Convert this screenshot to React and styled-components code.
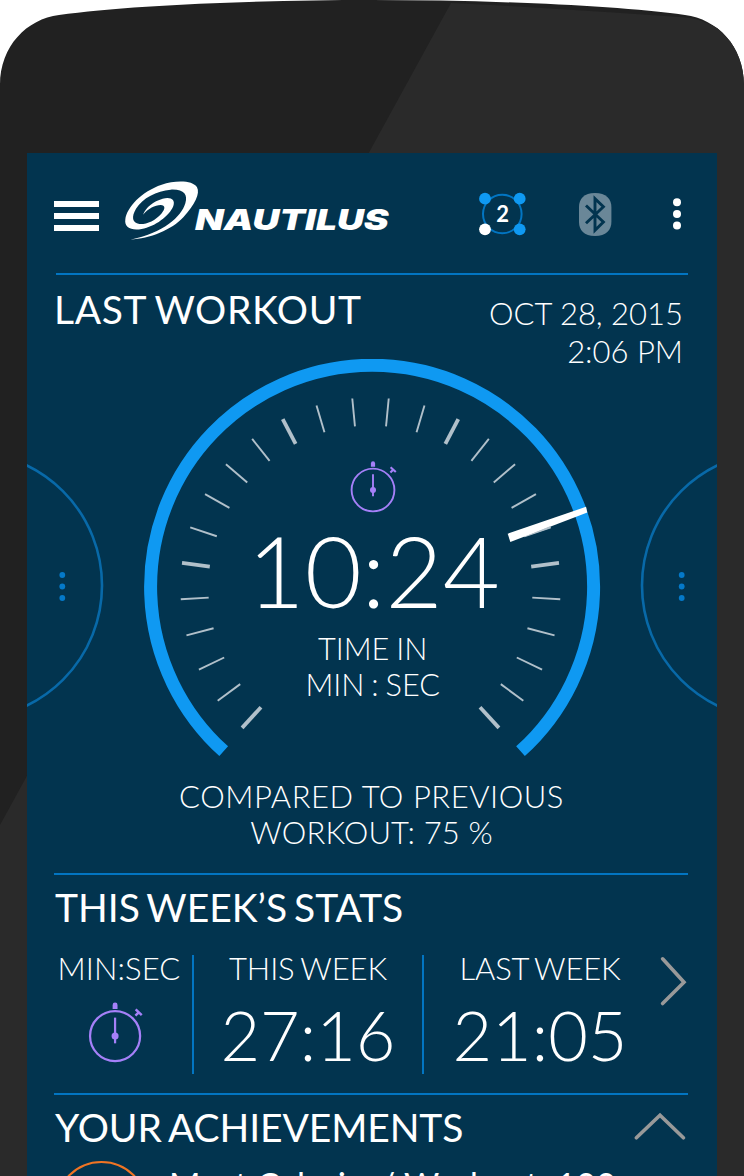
import React from 'react';
import styled, { createGlobalStyle } from 'styled-components';

const GlobalStyle = createGlobalStyle`
  *, *::before, *::after { box-sizing: border-box; }
  html, body { margin: 0; padding: 0; background: #fff; }
  body { font-family: Lato, "Liberation Sans", sans-serif; color: #fff; overflow: hidden; }
  svg { display: block; flex: none; }
`;

const Phone = styled.main`
  display: grid;
  width: 744px;
  height: 1176px;
  overflow: hidden;
`;

const Shell = styled.svg`
  grid-area: 1 / 1;
`;

const Screen = styled.div`
  grid-area: 1 / 1;
  margin: 153px 27px 0;
  background: #02344f;
  overflow: hidden;
  z-index: 1;
`;

const Header = styled.header`
  display: flex;
  height: 120px;
  padding-left: 27px;
`;

const MenuButton = styled.div`
  display: flex;
  flex-direction: column;
  gap: 6px;
  width: 45px;
  margin-top: 48px;
`;

const MenuBar = styled.span`
  height: 6px;
  background: #fff;
`;

const Logo = styled.svg`
  margin: 25px 0 0 23px;
`;

const HeaderIcon = styled.svg`
  margin: ${(p) => p.$margin};
`;

const Divider = styled.div`
  height: 2px;
  margin: 0 29px 0 ${(p) => p.$left || 27}px;
  background: #0275c2;
`;

const WorkoutSection = styled.section`
  height: 598px;
`;

const WorkoutHead = styled.div`
  display: flex;
  justify-content: space-between;
  height: 84px;
  padding: 14px 34px 0 27px;
`;

const Title = styled.h2`
  margin: 0;
  font-size: 39px;
  font-weight: 400;
  line-height: 40px;
  letter-spacing: ${(p) => p.$tracking || 0}px;
  word-spacing: ${(p) => p.$wordGap || 0}px;
  white-space: nowrap;
`;

const Caption = styled.div`
  font-size: ${(p) => p.$size || 31}px;
  font-weight: 300;
  line-height: ${(p) => p.$line || 36}px;
  letter-spacing: ${(p) => p.$tracking || 0}px;
  word-spacing: ${(p) => p.$wordGap || 0}px;
  text-align: ${(p) => p.$align || 'center'};
  white-space: nowrap;
`;

const DateBlock = styled(Caption)`
  margin-top: 5px;
`;

const Carousel = styled.div`
  display: flex;
  justify-content: space-between;
  height: 398px;
`;

const DialStack = styled.div`
  display: grid;
  width: 464px;
`;

const DialFace = styled.svg`
  grid-area: 1 / 1;
`;

const Readout = styled.div`
  grid-area: 1 / 1;
  display: flex;
  flex-direction: column;
  align-items: center;
  padding: 101.4px 0 0 1.4px;
`;

const BigTime = styled.div`
  margin: 6px 0 11px 2px;
  font-size: 98.5px;
  font-weight: 300;
  line-height: 100px;
`;

const Comparison = styled.div`
  display: flex;
  flex-direction: column;
  align-items: center;
  margin: 21px 1px 0 0;
`;

const StatsSection = styled.section`
  height: 218px;
  padding: 12px 27px 0 28px;
`;

const StatsRow = styled.div`
  display: flex;
  margin-top: 23px;
`;

const StatColumn = styled.div`
  display: flex;
  flex-direction: column;
  align-items: center;
  width: ${(p) => p.$width}px;
  margin-right: ${(p) => p.$gap || 0}px;
`;

const StatRule = styled.div`
  width: 2px;
  height: 119px;
  margin-top: 5px;
  background: #0275c2;
`;

const StatValue = styled.div`
  margin-top: 14px;
  font-size: 68.4px;
  font-weight: 300;
  line-height: 70px;
`;

const TimerSlot = styled.div`
  margin: 15px 8px 0 0;
`;

const Chevron = styled.svg`
  margin-top: ${(p) => p.$top}px;
`;

const AchievementsSection = styled.section`
  height: 81px;
  padding: 12px 27px 0 28px;
`;

const AchievementsHead = styled.div`
  display: flex;
  justify-content: space-between;
`;

const AchievementRow = styled.div`
  display: flex;
  gap: 21px;
  margin-top: 14px;
`;

const Medal = styled.div`
  flex: none;
  width: 93px;
  height: 93px;
  border: 2px solid #f07423;
  border-radius: 50%;
`;

const AchievementName = styled.div`
  margin-top: 4px;
  font-size: 34px;
  font-weight: 400;
  line-height: 40px;
  letter-spacing: 0.36px;
  white-space: nowrap;
`;

function Stopwatch({ scale = 1 }) {
  return (
    <svg width={48 * scale} height={54 * scale} viewBox="-24 -30 48 54" fill="none" stroke="#a580f8">
      <circle r="21.4" strokeWidth="1.9" />
      <path d="M-2.1-23.2v-3.4a2.1 2.1 0 0 1 4.2 0v3.4z" fill="#a580f8" stroke="none" />
      <path d="M0-15.8V6.2" strokeWidth="1.9" />
      <circle r="3" fill="#a580f8" stroke="none" />
      <path d="M17.6-22.8l5.2 4.9M20.4-20.4l-3 3" strokeWidth="2.1" />
    </svg>
  );
}

function SidePeek({ side }) {
  const left = side === 'left';
  const x = left ? 62.3 : 681.7;
  return (
    <svg width="80" height="398" viewBox={`${left ? 27 : 637} 359 80 398`}>
      <circle cx={left ? -31.5 : 775.5} cy="585.5" r="133.5" fill="none" stroke="#0869a8" strokeWidth="2.6" />
      {[575, 586.5, 598].map((y) => (
        <circle key={y} cx={x} cy={y} r="2.9" fill="#0479c9" />
      ))}
    </svg>
  );
}

const ticks = [];
for (let k = 0; k < 13; k += 1) {
  const angle = 5.5 + k * 11;
  ticks.push({ angle, major: k % 5 === 2 }, { angle: -angle, major: k % 5 === 2 });
}

function Gauge() {
  return (
    <DialFace width="464" height="398" viewBox="140 359 464 398">
      <path d="M223.7 751.2A221.5 221.5 0 1 1 520.5 751.2" fill="none" stroke="#0f99f2" strokeWidth="13" />
      {ticks.map((t) => (
        <path
          key={t.angle}
          d="M370.5 397.6v28"
          stroke="#b1c0ca"
          strokeWidth={t.major ? 3.8 : 1.9}
          transform={`rotate(${t.angle} 370.5 587.7)`}
        />
      ))}
      <path d="M507.7 533.7L586 506.8L587.3 512.4L510.3 542z" fill="#fff" />
      <path d="M525 536.4L550 526.3L550.3 528L524 537z" fill="#b1c0ca" />
    </DialFace>
  );
}

export default function App() {
  return (
    <>
      <GlobalStyle />
      <Phone>
        <Shell width="744" height="1176" viewBox="0 0 744 1176">
          <defs>
            <clipPath id="body">
              <path d="M0 85C0 46 27 19 59 15C130 5 260 0 372 0C484 0 614 5 685 15C717 19 744 46 744 85V1176H0z" />
            </clipPath>
          </defs>
          <g clipPath="url(#body)">
            <path d="M0 0H744V1176H0z" fill="#212121" />
            <path d="M451 3L522 6.7L617 12.7L683 17.3C692 18 701 20 709 24L744 40V1176H0V825z" fill="#2a2a2a" />
          </g>
        </Shell>
        <Screen>
          <Header>
            <MenuButton>
              <MenuBar />
              <MenuBar />
              <MenuBar />
            </MenuButton>
            <Logo width="270" height="66" viewBox="246 24 810 198" fill="#fff">
              <path d="M271 209C330 206 395 180 430 142C465 104 481 70 471 52C458 30 405 31 365 44C305 64 260 112 256 148C252 173 275 183 305 177C345 170 388 138 400 108C407 88 392 80 368 86C340 94 318 111 309 134C325 116 345 105 362 105C376 105 377 116 364 131C346 152 318 164 298 162C276 158 274 140 288 116C308 84 350 62 392 59C432 57 444 74 436 100C424 140 370 190 271 209Z" />
              <text
                x="465"
                y="180"
                fontFamily="Inter, sans-serif"
                fontWeight="900"
                fontStyle="italic"
                fontSize="86"
                textLength="581"
                lengthAdjust="spacingAndGlyphs"
              >
                NAUTILUS
              </text>
            </Logo>
            <HeaderIcon $margin="35px 0 0 84px" width="52" height="52" viewBox="476 188 52 52">
              <circle cx="502.3" cy="214" r="19.3" fill="none" stroke="#0275c2" strokeWidth="2" />
              <g fill="#0f99f2">
                <circle cx="485" cy="198.7" r="5.9" />
                <circle cx="519.7" cy="198.7" r="5.9" />
                <circle cx="519.7" cy="229.3" r="5.9" />
              </g>
              <circle cx="485" cy="229.3" r="5.9" fill="#fff" />
              <text
                x="502.6"
                y="222"
                fill="#fff"
                fontFamily="Lato, sans-serif"
                fontWeight="700"
                fontSize="22"
                textAnchor="middle"
              >
                2
              </text>
            </HeaderIcon>
            <HeaderIcon $margin="39px 0 0 50px" width="34" height="45" viewBox="578 192 34 45">
              <path d="M595 193C606 193 611.4 199 611.4 207V222C611.4 230 606 236 595 236C584 236 579 230 579 222V207C579 199 584 193 595 193z" fill="#6a8798" />
              <path
                d="M586 205.5L603.4 222L595 230.2V198.6L603.4 206.7L586 223.3"
                fill="none"
                stroke="#02344f"
                strokeWidth="2.9"
              />
            </HeaderIcon>
            <HeaderIcon $margin="43px 0 0 60px" width="10" height="36" viewBox="671.7 196 10 36" fill="#fff">
              <circle cx="676.7" cy="202.3" r="4" />
              <circle cx="676.7" cy="214" r="4" />
              <circle cx="676.7" cy="225.5" r="4" />
            </HeaderIcon>
          </Header>
          <Divider $left={29} />

          <WorkoutSection>
            <WorkoutHead>
              <Title $tracking={0.62} $wordGap={-1.5}>LAST WORKOUT</Title>
              <DateBlock $line={38} $align="right">
                OCT 28, 2015
                <br />
                2:06 PM
              </DateBlock>
            </WorkoutHead>
            <Carousel>
              <SidePeek side="left" />
              <DialStack>
                <Gauge />
                <Readout>
                  <Stopwatch />
                  <BigTime>10:24</BigTime>
                  <Caption $size={30.7} $wordGap={-1.5}>
                    TIME IN
                    <br />
                    MIN : SEC
                  </Caption>
                </Readout>
              </DialStack>
              <SidePeek side="right" />
            </Carousel>
            <Comparison>
              <Caption $tracking={0.53}>COMPARED TO PREVIOUS</Caption>
              <Caption $tracking={0.15}>WORKOUT: 75 %</Caption>
            </Comparison>
          </WorkoutSection>
          <Divider />

          <StatsSection>
            <Title $wordGap={-3}>THIS WEEK’S STATS</Title>
            <StatsRow>
              <StatColumn $width={128} $gap={9}>
                <Caption $tracking={0.1}>MIN:SEC</Caption>
                <TimerSlot>
                  <Stopwatch scale={1.17} />
                </TimerSlot>
              </StatColumn>
              <StatRule />
              <StatColumn $width={228}>
                <Caption $tracking={-0.1} $wordGap={-2}>THIS WEEK</Caption>
                <StatValue>27:16</StatValue>
              </StatColumn>
              <StatRule />
              <StatColumn $width={232}>
                <Caption $tracking={-0.2} $wordGap={-1.8}>LAST WEEK</Caption>
                <StatValue>21:05</StatValue>
              </StatColumn>
              <Chevron
                $top={5}
                width="32"
                height="54"
                viewBox="656 955 32 54"
                fill="none"
                stroke="#999"
                strokeWidth="3.6"
                strokeLinecap="round"
              >
                <path d="M662.6 958.8L684 982.2L662.6 1003.6" />
              </Chevron>
            </StatsRow>
          </StatsSection>
          <Divider />

          <AchievementsSection>
            <AchievementsHead>
              <Title $tracking={-0.1} $wordGap={-2.4}>YOUR ACHIEVEMENTS</Title>
              <Chevron
                $top={1}
                width="56"
                height="36"
                viewBox="634 1108 56 36"
                fill="none"
                stroke="#999"
                strokeWidth="3.6"
                strokeLinecap="round"
              >
                <path d="M636.4 1137.8L660 1115.3L683.4 1137.8" />
              </Chevron>
            </AchievementsHead>
            <AchievementRow>
              <Medal />
              <AchievementName>Most Calories/ Workout: 100</AchievementName>
            </AchievementRow>
          </AchievementsSection>
        </Screen>
      </Phone>
    </>
  );
}
